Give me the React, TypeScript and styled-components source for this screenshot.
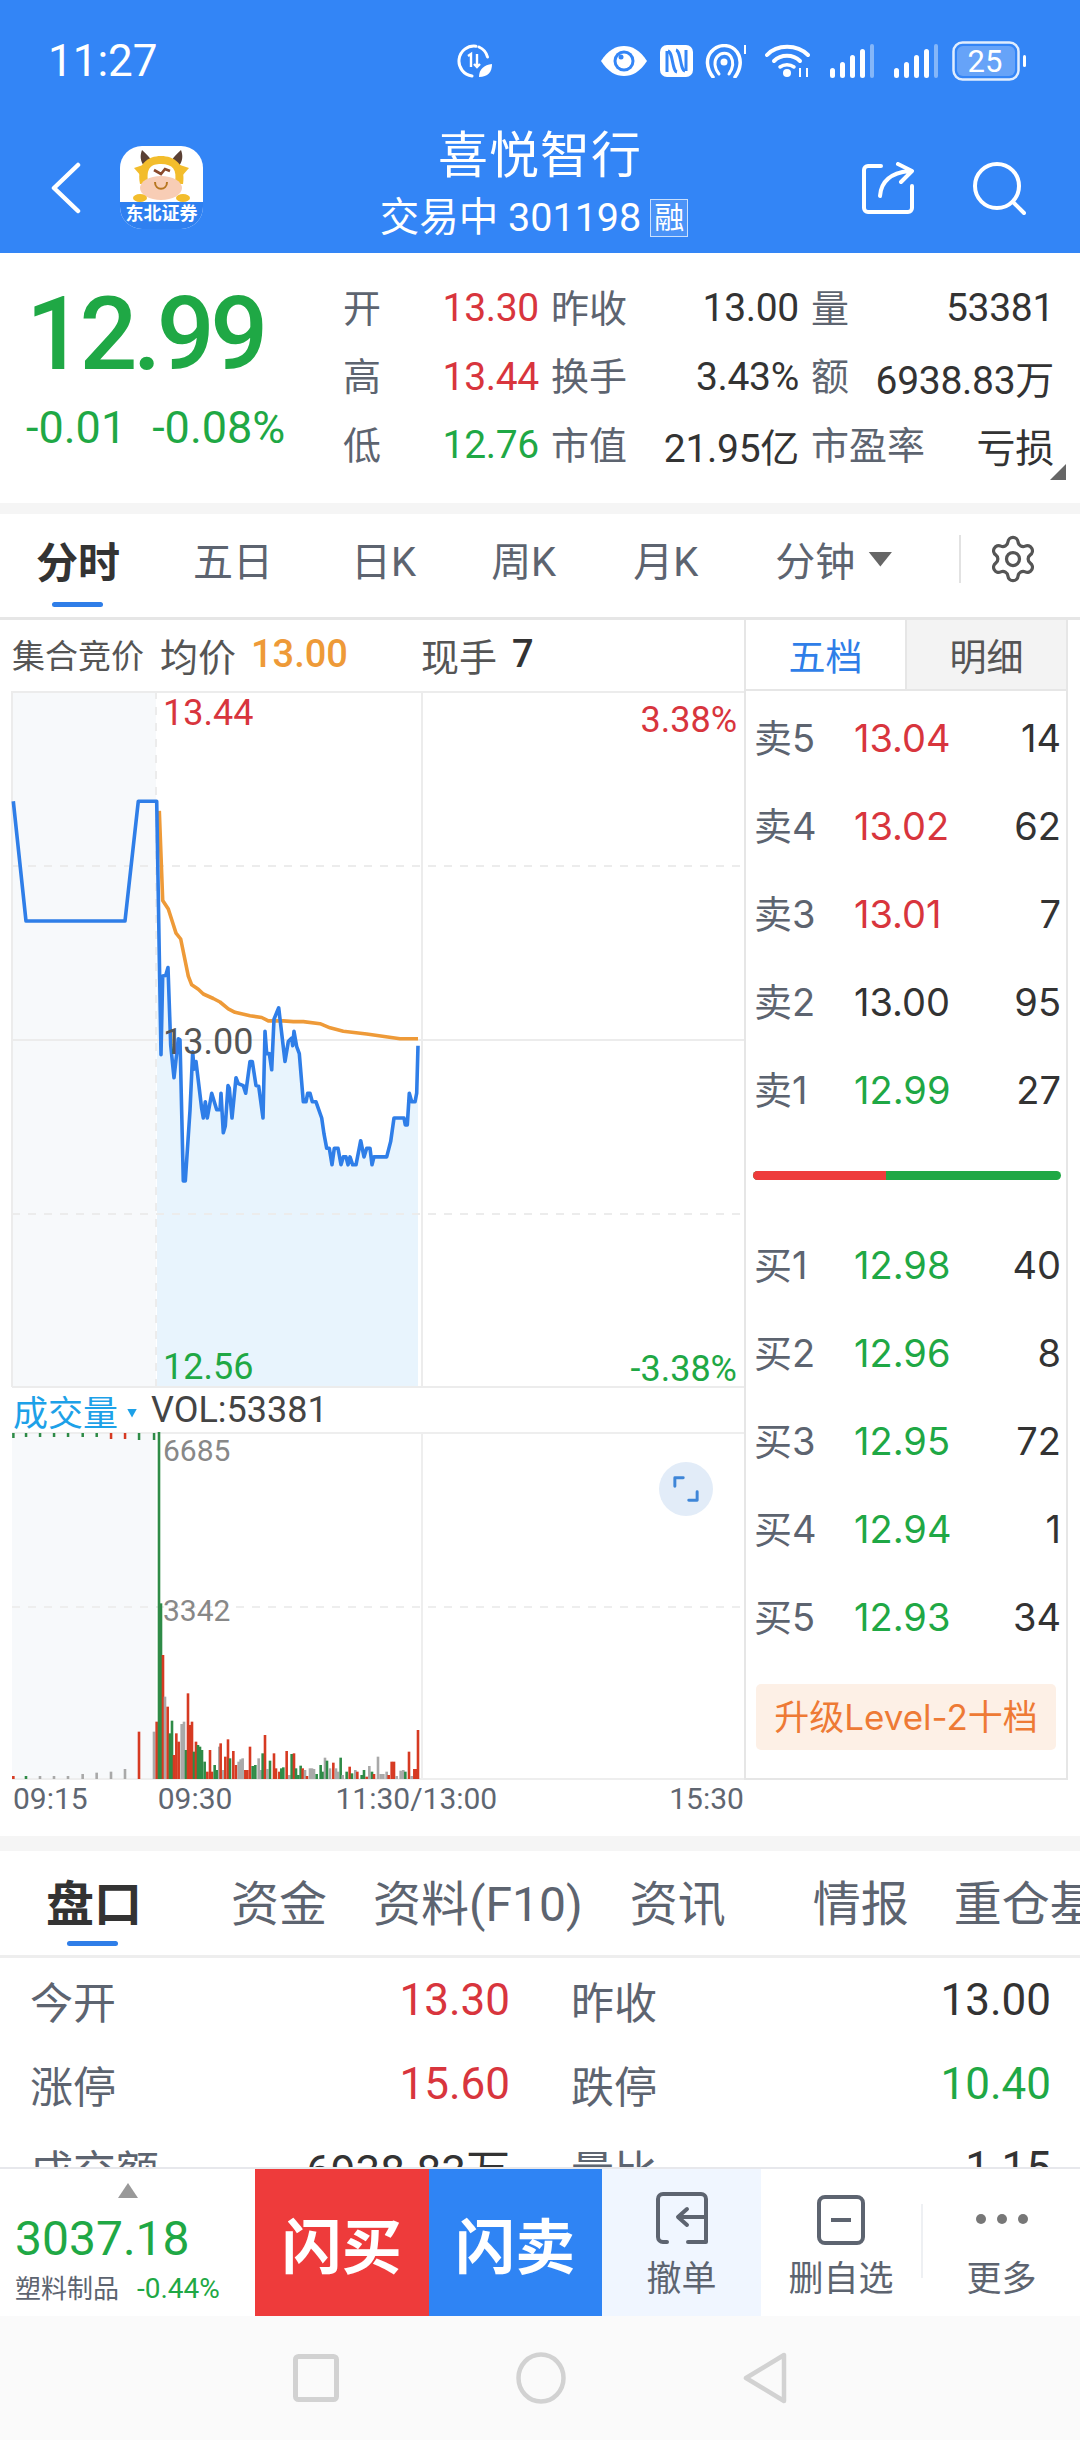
import styled, { createGlobalStyle } from 'styled-components';
import { Settings } from 'lucide-react';

const GREEN = '#1fa845';
const RED = '#d8353d';
const BLUE = '#3385f6';
const NUM = 'Roboto, "Noto Sans CJK SC", sans-serif';

const GlobalStyle = createGlobalStyle`
  html, body { margin: 0; padding: 0; background: #fff; }
  * { box-sizing: border-box; }
`;

const Page = styled.div`
  width: 1080px;
  height: 2440px;
  overflow: hidden;
  display: flex;
  flex-direction: column;
  font-family: ${NUM};
  color: #333;
  background: #fff;
`;

/* header */
const Header = styled.header`
  height: 253px;
  flex: none;
  background: ${BLUE};
  color: #fff;
`;

const StatusBar = styled.div`
  height: 122px;
  display: flex;
  align-items: center;
  padding: 0 54px 0 48px;
`;

const Clock = styled.span`
  font-size: 44px;
  width: 407px;
`;

const StatusIcon = styled.svg<{ $ml?: number }>`
  display: block;
  margin-left: ${(p) => p.$ml ?? 0}px;
  flex: none;
`;

const Spacer = styled.div`
  flex: 1;
`;

const NavBar = styled.div`
  height: 131px;
  display: grid;
  grid-template-columns: 1fr auto 1fr;
  align-items: center;
`;

const NavLeft = styled.div`
  display: flex;
  align-items: center;
  padding-left: 50px;
  gap: 39px;
`;

const NavRight = styled.div`
  display: flex;
  align-items: center;
  justify-content: flex-end;
  padding-right: 54px;
  gap: 56px;
`;

const Logo = styled.div`
  width: 83px;
  height: 83px;
  border-radius: 22px;
  overflow: hidden;
  background: #fff;
  display: flex;
  flex-direction: column;
`;

const LogoLabel = styled.div`
  height: 27px;
  background: #2f80f0;
  color: #fff;
  font-size: 18px;
  font-weight: 700;
  line-height: 24px;
  text-align: center;
  white-space: nowrap;
`;

const TitleBlock = styled.div`
  display: flex;
  flex-direction: column;
  align-items: center;
  margin-bottom: 7px;
`;

const Title = styled.div`
  font-size: 50px;
  line-height: 56px;
  letter-spacing: 1px;
`;

const SubTitle = styled.div`
  margin-top: 12px;
  font-size: 39.5px;
  line-height: 44px;
  display: flex;
  align-items: center;
  gap: 9px;
  margin-left: -12px;
`;

const MarginTag = styled.span`
  width: 38px;
  height: 38px;
  border: 1px solid rgba(255, 255, 255, 0.7);
  background: rgba(255, 255, 255, 0.12);
  font-size: 30px;
  line-height: 36px;
  text-align: center;
  overflow: hidden;
`;

/* quote */
const Quote = styled.section`
  position: relative;
  height: 250px;
  flex: none;
  display: flex;
`;

const PriceBlock = styled.div`
  width: 343px;
  padding: 31px 0 0 26px;
`;

const BigPrice = styled.div`
  font-size: 102px;
  line-height: 100px;
  font-weight: 500;
  letter-spacing: -4.5px;
  color: ${GREEN};
`;

const ChangeRow = styled.div`
  margin: 19px 0 0 0;
  display: flex;
  gap: 26px;
  font-size: 45px;
  line-height: 50px;
  color: ${GREEN};
`;

const QuoteGrid = styled.div`
  padding-top: 21px;
`;

const QuoteRow = styled.div`
  height: 68.5px;
  display: flex;
  align-items: center;
  gap: 12px;
`;

const Pair = styled.div<{ $w: number }>`
  width: ${(p) => p.$w}px;
  display: flex;
  justify-content: space-between;
  align-items: center;
  white-space: nowrap;
`;

const QuoteLabel = styled.span`
  font-size: 38px;
  color: #5d6470;
  margin-bottom: 6px;
`;

const QuoteValue = styled.span<{ $c?: string }>`
  font-size: 39px;
  letter-spacing: -0.3px;
  color: ${(p) => p.$c ?? '#333'};
`;

const CornerMark = styled.div`
  position: absolute;
  right: 14px;
  bottom: 23px;
  width: 16px;
  height: 16px;
  background: #666;
  clip-path: polygon(100% 0, 100% 100%, 0 100%);
`;

const Strip = styled.div<{ $h: number }>`
  height: ${(p) => p.$h}px;
  flex: none;
  background: #f5f5f5;
`;

/* chart tabs */
const ChartTabs = styled.nav`
  height: 106px;
  flex: none;
  display: flex;
  align-items: center;
  padding: 0 41px 13px 36px;
  border-bottom: 3px solid #e6e6e6;
`;

const ChartTab = styled.span<{ $ml?: number; $active?: boolean }>`
  position: relative;
  margin-left: ${(p) => p.$ml ?? 0}px;
  font-size: ${(p) => (p.$active ? 42 : 40)}px;
  font-weight: ${(p) => (p.$active ? 700 : 400)};
  color: ${(p) => (p.$active ? '#333' : '#5d6470')};
  white-space: nowrap;

  ${(p) =>
    p.$active &&
    `&::after {
      content: '';
      position: absolute;
      left: 16px;
      right: 17px;
      bottom: -17px;
      height: 5px;
      border-radius: 3px;
      background: #2f7ee8;
    }`}
`;

const TabCaret = styled.span`
  margin-left: 13px;
  width: 24px;
  height: 15px;
  background: #666;
  clip-path: polygon(0 0, 100% 0, 50% 100%);
`;

const TabDivider = styled.span`
  width: 2px;
  height: 48px;
  margin-left: 67px;
  background: #e2e2e2;
`;

const GearWrap = styled.span`
  display: flex;
  margin-left: auto;
  color: #555;
`;

/* chart area */
const ChartSection = styled.section`
  height: 1216px;
  flex: none;
  display: flex;
`;

const ChartColumn = styled.div`
  width: 744px;
  flex: none;
  display: flex;
  flex-direction: column;
`;

const ChartInfo = styled.div`
  height: 71px;
  flex: none;
  display: flex;
  align-items: center;
  padding: 0 0 3px 12px;
  white-space: nowrap;
`;

const InfoLabel = styled.span<{ $ml?: number; $size?: number }>`
  margin-left: ${(p) => p.$ml ?? 0}px;
  font-size: ${(p) => p.$size ?? 38}px;
  color: #555;
`;

const InfoValue = styled.span<{ $c: string; $ml: number }>`
  margin-left: ${(p) => p.$ml}px;
  font-size: 38px;
  font-weight: 500;
  color: ${(p) => p.$c};
`;

const ChartBox = styled.div<{ $h: number }>`
  position: relative;
  height: ${(p) => p.$h}px;
  flex: none;

  svg {
    display: block;
  }
`;

const ChartTag = styled.span<{ $c: string; $x?: number; $r?: number; $cy: number; $size?: number }>`
  position: absolute;
  ${(p) => (p.$r !== undefined ? `right: ${p.$r}px;` : `left: ${p.$x}px;`)}
  top: ${(p) => p.$cy - 25}px;
  font-size: ${(p) => p.$size ?? 36}px;
  line-height: 50px;
  color: ${(p) => p.$c};
`;

const ExpandButton = styled.div`
  position: absolute;
  left: 659px;
  top: 30px;
  width: 54px;
  height: 54px;
  border-radius: 50%;
  background: #e2ecf8;
  display: flex;
  align-items: center;
  justify-content: center;
`;

const VolHeader = styled.div`
  height: 44px;
  flex: none;
  display: flex;
  align-items: center;
  padding-left: 13px;
  white-space: nowrap;
`;

const VolTitle = styled.span`
  font-size: 35px;
  color: #1da1e8;
`;

const VolCaret = styled.span`
  width: 10px;
  height: 9px;
  margin: 6px 14px 0 9px;
  background: #1da1e8;
  clip-path: polygon(0 0, 100% 0, 50% 100%);
`;

const VolValue = styled.span`
  font-size: 36px;
  color: #444;
`;

const TimeAxis = styled.div`
  height: 56px;
  display: flex;
  padding: 0 0 0 13px;
  font-size: 30px;
  line-height: 38px;
  color: #5f6671;
`;

const TimeLabel = styled.span<{ $ml?: number }>`
  margin-left: ${(p) => p.$ml ?? 0}px;
`;

/* order book */
const DepthColumn = styled.div`
  width: 324px;
  height: 1160px;
  flex: none;
  border-left: 2px solid #e6e6e6;
  border-right: 2px solid #e6e6e6;
  border-bottom: 2px solid #e6e6e6;
  display: flex;
  flex-direction: column;
`;

const DepthTabs = styled.div`
  height: 71px;
  flex: none;
  display: flex;
  border-bottom: 2px solid #e6e6e6;
`;

const DepthTab = styled.div<{ $active?: boolean }>`
  flex: 1;
  display: flex;
  align-items: center;
  justify-content: center;
  font-size: 37px;
  color: ${(p) => (p.$active ? '#2f7ee8' : '#555')};
  background: ${(p) => (p.$active ? '#fff' : '#f3f3f3')};
  border-left: ${(p) => (p.$active ? 'none' : '2px solid #e6e6e6')};
`;

const DepthList = styled.div`
  padding-top: 3px;
`;

const DepthRow = styled.div`
  height: 88px;
  display: grid;
  grid-template-columns: 100px 1fr auto;
  align-items: center;
  padding: 0 5px 0 8px;
  font-family: Inter, "Noto Sans CJK SC", sans-serif;
  font-size: 38px;
`;

const DepthLabel = styled.span`
  color: #5d6470;
  white-space: nowrap;
  margin-bottom: 6px;
`;

const DepthPrice = styled.span<{ $c: string }>`
  color: ${(p) => p.$c};
`;

const DepthQty = styled.span`
  color: #333;
`;

const Balance = styled.div`
  margin: 37px 0 0 7px;
  width: 308px;
  height: 9px;
  border-radius: 5px;
  overflow: hidden;
  display: flex;
  background: ${GREEN};
`;

const BalanceRed = styled.div`
  width: 133px;
  background: #ee3b3b;
`;

const BuyList = styled.div`
  margin-top: 41px;
`;

const UpgradeBadge = styled.div`
  margin: 23px 0 0 10px;
  width: 300px;
  height: 66px;
  border-radius: 5px;
  background: #fdf0e6;
  color: #ee7a35;
  font-family: Inter, "Noto Sans CJK SC", sans-serif;
  font-size: 35px;
  line-height: 66px;
  text-align: center;
  white-space: nowrap;
`;

/* detail */
const DetailTabs = styled.nav`
  height: 107px;
  flex: none;
  display: flex;
  align-items: center;
  padding: 0 0 7px 46px;
  border-bottom: 3px solid #eee;
  overflow: hidden;
  white-space: nowrap;
`;

const DetailTab = styled.span<{ $ml?: number; $active?: boolean }>`
  position: relative;
  flex: none;
  margin-left: ${(p) => p.$ml ?? 0}px;
  font-size: 48px;
  font-weight: ${(p) => (p.$active ? 700 : 400)};
  color: ${(p) => (p.$active ? '#333' : '#5d6470')};

  ${(p) =>
    p.$active &&
    `&::after {
      content: '';
      position: absolute;
      left: 21px;
      right: 24px;
      bottom: -11px;
      height: 5px;
      border-radius: 3px;
      background: #2f7ee8;
    }`}
`;

const DetailRows = styled.div`
  height: 209px;
  flex: none;
  overflow: hidden;
`;

const DetailRow = styled.div`
  height: 84px;
  display: flex;
  align-items: center;
  gap: 61px;
  padding-left: 30px;
`;

const DetailPair = styled.div`
  width: 480px;
  display: flex;
  justify-content: space-between;
  align-items: center;
`;

const DetailLabel = styled.span`
  font-size: 43px;
  color: #5d6470;
`;

const DetailValue = styled.span<{ $c?: string }>`
  font-size: 44px;
  color: ${(p) => p.$c ?? '#333'};
`;

/* bottom bar */
const BottomBar = styled.div`
  height: 149px;
  flex: none;
  display: flex;
  border-top: 2px solid #e7e8ec;
`;

const IndexBlock = styled.div`
  position: relative;
  width: 255px;
  flex: none;
  padding: 40px 0 0 15px;
`;

const IndexCaret = styled.span`
  position: absolute;
  left: 118px;
  top: 14px;
  width: 20px;
  height: 15px;
  background: #999;
  clip-path: polygon(50% 0, 100% 100%, 0 100%);
`;

const IndexValue = styled.div`
  font-size: 48px;
  line-height: 60px;
  color: ${GREEN};
`;

const IndexMeta = styled.div`
  margin-top: 2px;
  display: flex;
  align-items: center;
  gap: 18px;
  line-height: 36px;
  white-space: nowrap;
`;

const IndexName = styled.span`
  font-size: 26px;
  color: #5d6470;
`;

const IndexChange = styled.span`
  font-size: 28px;
  color: ${GREEN};
`;

const FlashButton = styled.div<{ $bg: string }>`
  width: 173.5px;
  flex: none;
  background: ${(p) => p.$bg};
  color: #fff;
  font-size: 60px;
  font-weight: 700;
  display: flex;
  align-items: center;
  justify-content: center;
`;

const ActionButton = styled.div<{ $w: number; $bg?: string }>`
  width: ${(p) => p.$w}px;
  flex: none;
  background: ${(p) => p.$bg ?? 'transparent'};
  display: flex;
  flex-direction: column;
  align-items: center;
  padding-top: 22px;
  font-size: 35px;
  line-height: 42px;
  color: #5d6470;
`;

const IconSlot = styled.div`
  height: 54px;
  margin-bottom: 14px;
  display: flex;
  align-items: flex-end;

  svg {
    display: block;
  }
`;

const ActionDivider = styled.div`
  width: 2px;
  height: 74px;
  margin-top: 35px;
  flex: none;
  background: #eef0f3;
`;

const NavHints = styled.div`
  flex: 1;
  background: #fafafa;
  display: flex;
  align-items: center;
  justify-content: center;
  gap: 177px;
`;

const priceLine: [number, number][] = [
  [40, 352], [78, 700], [375, 700], [415, 352], [470, 352], [478, 800], [483, 1088], [488, 860], [497, 858], [504, 835],
  [512, 1060], [522, 1155], [535, 1042], [540, 1045], [550, 1455], [556, 1455], [570, 1250], [578, 1080], [582, 1130],
  [588, 1108], [605, 1245], [610, 1272], [616, 1225], [622, 1272], [635, 1200], [650, 1248], [660, 1248], [663, 1200],
  [670, 1315], [676, 1295], [684, 1178], [688, 1185], [696, 1272], [708, 1155], [715, 1172], [730, 1178], [737, 1200],
  [750, 1108], [757, 1108], [768, 1178], [776, 1180], [789, 1272], [795, 1020], [800, 1085], [808, 1085], [815, 1132],
  [822, 985], [836, 952], [855, 1108], [865, 1050], [875, 1040], [878, 1062], [882, 1020], [890, 1065], [898, 1085],
  [910, 1225], [918, 1225], [923, 1200], [930, 1200], [937, 1225], [948, 1225], [965, 1272], [972, 1318], [980, 1360],
  [988, 1360], [996, 1408], [1003, 1360], [1014, 1360], [1023, 1408], [1030, 1385], [1038, 1385], [1044, 1408],
  [1050, 1385], [1058, 1408], [1068, 1408], [1082, 1338], [1092, 1385], [1100, 1360], [1110, 1360], [1116, 1408],
  [1122, 1385], [1160, 1385], [1172, 1340], [1182, 1272], [1212, 1272], [1216, 1292], [1222, 1292], [1228, 1200],
  [1235, 1225], [1245, 1225], [1250, 1200], [1254, 1062],
];

const avgLine: [number, number][] = [
  [478, 380], [488, 640], [505, 665], [518, 705], [528, 735], [542, 752], [565, 860], [575, 885], [595, 898], [610, 912],
  [640, 925], [660, 935], [685, 955], [705, 965], [750, 975], [785, 980], [805, 990], [850, 990], [880, 992], [910, 992],
  [960, 998], [990, 1010], [1030, 1020], [1100, 1028], [1200, 1042], [1254, 1042],
];

const toPoint = ([x, y]: [number, number]) => `${(x / 3).toFixed(1)},${(y / 2.904 - 11).toFixed(1)}`;

const volColors: Record<string, string> = { r: '#d63a22', g: '#2e8b47', a: '#a9a9a9' };

const volBars: [number, number, string][] = [
  [40, 1218, 'r'], [78, 1218, 'g'], [120, 1218, 'a'], [162, 1218, 'a'], [204, 1218, 'a'], [248, 1212, 'a'], [290, 1208, 'a'],
  [333, 1205, 'a'], [375, 1197, 'a'], [417, 1085, 'r'], [462, 1085, 'a'], [470, 1055, 'r'], [477, 185, 'g'], [483, 700, 'g'],
  [489, 855, 'r'], [495, 980, 'a'], [503, 1010, 'r'], [510, 1090, 'g'], [516, 1052, 'g'], [522, 1155, 'r'], [529, 1090, 'r'],
  [536, 1115, 'r'], [545, 1062, 'a'], [552, 1055, 'a'], [558, 1140, 'g'], [564, 970, 'r'], [570, 1065, 'r'], [576, 1055, 'r'],
  [582, 1145, 'g'], [588, 1115, 'r'], [594, 1125, 'g'], [600, 1130, 'g'], [606, 1140, 'g'], [614, 1175, 'g'], [622, 1205, 'r'],
  [630, 1140, 'r'], [636, 1205, 'r'], [644, 1185, 'g'], [650, 1200, 'g'], [658, 1130, 'a'], [662, 1120, 'r'], [670, 1200, 'a'],
  [676, 1160, 'r'], [684, 1108, 'r'], [690, 1165, 'g'], [700, 1143, 'r'], [708, 1185, 'r'], [716, 1175, 'a'], [722, 1168, 'a'],
  [728, 1165, 'a'], [736, 1200, 'r'], [742, 1200, 'r'], [750, 1130, 'r'], [758, 1188, 'g'], [766, 1185, 'g'], [776, 1165, 'a'],
  [782, 1200, 'a'], [788, 1150, 'g'], [795, 1095, 'r'], [802, 1197, 'a'], [810, 1172, 'g'], [822, 1150, 'r'], [828, 1195, 'r'],
  [838, 1205, 'r'], [844, 1195, 'g'], [850, 1192, 'g'], [860, 1143, 'r'], [868, 1215, 'a'], [875, 1152, 'g'], [882, 1150, 'r'],
  [888, 1195, 'g'], [895, 1215, 'g'], [902, 1187, 'g'], [908, 1195, 'r'], [915, 1200, 'a'], [921, 1218, 'r'], [930, 1195, 'a'],
  [936, 1195, 'a'], [942, 1197, 'a'], [950, 1212, 'g'], [962, 1185, 'g'], [968, 1205, 'g'], [975, 1163, 'a'], [981, 1172, 'g'],
  [990, 1195, 'a'], [1000, 1178, 'r'], [1008, 1195, 'a'], [1014, 1205, 'a'], [1022, 1163, 'g'], [1028, 1215, 'a'], [1040, 1205, 'g'],
  [1049, 1190, 'r'], [1056, 1210, 'g'], [1066, 1200, 'a'], [1072, 1205, 'r'], [1085, 1215, 'g'], [1092, 1200, 'g'], [1100, 1220, 'r'],
  [1108, 1188, 'a'], [1116, 1205, 'g'], [1122, 1212, 'r'], [1134, 1160, 'a'], [1142, 1212, 'a'], [1150, 1212, 'a'], [1160, 1205, 'a'],
  [1166, 1215, 'r'], [1175, 1175, 'r'], [1182, 1175, 'r'], [1190, 1218, 'a'], [1202, 1202, 'a'], [1210, 1200, 'a'], [1216, 1205, 'g'],
  [1227, 1145, 'r'], [1235, 1218, 'a'], [1243, 1197, 'r'], [1248, 1197, 'r'], [1254, 1080, 'r'],
];

const topTicks: [number, number, string][] = [
  [40, 5, 'g'], [78, 4, 'g'], [120, 4, 'g'], [162, 4, 'g'], [204, 4, 'g'], [248, 4, 'g'], [290, 4, 'g'], [333, 6, 'r'], [375, 6, 'r'], [417, 7, 'g'], [462, 7, 'g'],
];

const sells = [
  { label: '卖5', price: '13.04', c: RED, qty: '14' },
  { label: '卖4', price: '13.02', c: RED, qty: '62' },
  { label: '卖3', price: '13.01', c: RED, qty: '7' },
  { label: '卖2', price: '13.00', c: '#333', qty: '95' },
  { label: '卖1', price: '12.99', c: GREEN, qty: '27' },
];

const buys = [
  { label: '买1', price: '12.98', c: GREEN, qty: '40' },
  { label: '买2', price: '12.96', c: GREEN, qty: '8' },
  { label: '买3', price: '12.95', c: GREEN, qty: '72' },
  { label: '买4', price: '12.94', c: GREEN, qty: '1' },
  { label: '买5', price: '12.93', c: GREEN, qty: '34' },
];

function SignalIcon({ ml }: { ml: number }) {
  return (
    <StatusIcon $ml={ml} width="45" height="34" viewBox="0 0 45 34">
      <rect x="1" y="24" width="5" height="10" rx="2.5" fill="#fff" />
      <rect x="11" y="18" width="5" height="16" rx="2.5" fill="#fff" />
      <rect x="21" y="11" width="5" height="23" rx="2.5" fill="#fff" />
      <rect x="31" y="5" width="5" height="29" rx="2.5" fill="#fff" />
      <rect x="41" y="0" width="4" height="34" rx="2" fill="#fff" opacity="0.4" />
    </StatusIcon>
  );
}

function PriceChart() {
  const line = priceLine.map(toPoint).join(' ');
  const area = `${priceLine.slice(4).map(toPoint).join(' ')} 418,696 157,696`;
  return (
    <svg width="744" height="697" viewBox="0 0 744 697">
      <rect x="12" y="0" width="144" height="696" fill="#f7f9fb" />
      <polygon points={area} fill="#e8f4fd" />
      <g stroke="#ececec" strokeWidth="2" fill="none">
        <path d="M12 1H744M12 349H744M12 696H744M12 0V696M422 0V696" />
        <path d="M12 175H744M12 523H744M156 0V696" strokeDasharray="8 8" />
      </g>
      <polyline points={avgLine.map(toPoint).join(' ')} fill="none" stroke="#ee9a38" strokeWidth="3.6" strokeLinejoin="round" />
      <polyline points={line} fill="none" stroke="#2f7ee8" strokeWidth="3.6" strokeLinejoin="round" />
    </svg>
  );
}

function VolumeChart() {
  return (
    <svg width="744" height="348" viewBox="0 0 744 348">
      <rect x="12" y="0" width="144" height="347" fill="#f7f9fb" />
      <g stroke="#eeeeee" strokeWidth="2" fill="none">
        <path d="M12 1H744M12 347H744M422 0V348" />
        <path d="M12 175H744" strokeDasharray="8 8" />
      </g>
      {topTicks.map(([x, h, c]) => (
        <rect key={x} x={x / 3 - 1.2} y="1" width="2.5" height={h} fill={volColors[c]} />
      ))}
      {volBars.map(([x, top, c]) => (
        <rect key={x} x={x / 3 - 1.3} y={top / 3 - 62} width="2.6" height={347 - (top / 3 - 62)} fill={volColors[c]} />
      ))}
    </svg>
  );
}

function DepthRows({ rows }: { rows: typeof sells }) {
  return (
    <>
      {rows.map((r) => (
        <DepthRow key={r.label}>
          <DepthLabel>{r.label}</DepthLabel>
          <DepthPrice $c={r.c}>{r.price}</DepthPrice>
          <DepthQty>{r.qty}</DepthQty>
        </DepthRow>
      ))}
    </>
  );
}

export default function App() {
  return (
    <Page>
      <GlobalStyle />
      <Header>
        <StatusBar>
          <Clock>11:27</Clock>
          <StatusIcon width="38" height="34" viewBox="0 0 38 34">
            <path d="M21 2.2A15 15 0 1 0 17 32" fill="none" stroke="#fff" strokeWidth="3" strokeLinecap="round" />
            <path d="M24 3A15 15 0 0 1 32.5 13" fill="none" stroke="#fff" strokeWidth="3" strokeLinecap="round" />
            <path d="M13 12l3-2v13M22 10v13M19 20l3 3 3-3" fill="none" stroke="#fff" strokeWidth="2.4" />
            <path d="M24 33c0-8 5-12 13-13 0 8-4 13-13 13z" fill="#fff" />
          </StatusIcon>
          <Spacer />
          <StatusIcon width="48" height="34" viewBox="0 0 48 34">
            <path d="M1 17C8 6 16 2 24 2s16 4 23 15c-7 11-15 15-23 15S8 28 1 17z" fill="#fff" />
            <circle cx="24" cy="17" r="10.5" fill={BLUE} />
            <circle cx="24" cy="17" r="7.5" fill="#fff" />
            <circle cx="21" cy="13" r="2.5" fill={BLUE} />
          </StatusIcon>
          <StatusIcon $ml={12} width="33" height="34" viewBox="0 0 33 34">
            <rect x="0" y="1" width="33" height="32" rx="7" fill="#fff" />
            <path d="M7 28V7M26 6v21M8 7c5 1 4 20 9 21M16 6c5 1 4 20 9 21" fill="none" stroke={BLUE} strokeWidth="3" />
          </StatusIcon>
          <StatusIcon $ml={12} width="44" height="34" viewBox="0 0 44 34">
            <path d="M8 33C1 24 1 14 6 8c8-9 20-8 26 0 5 7 4 17-2 25" fill="none" stroke="#fff" strokeWidth="3.5" strokeLinecap="round" />
            <path d="M14 30C9 24 9 17 12 13c4-5 11-5 14 0 3 5 2 11-2 17" fill="none" stroke="#fff" strokeWidth="3" strokeLinecap="round" />
            <circle cx="19" cy="18" r="3.5" fill="#fff" />
            <path d="M40 1v9" stroke="#fff" strokeWidth="2" />
          </StatusIcon>
          <StatusIcon $ml={16} width="45" height="34" viewBox="0 0 45 34">
            <path d="M2 11C12 0 32 0 43 11" fill="none" stroke="#fff" strokeWidth="4" strokeLinecap="round" />
            <path d="M9 17c7-7 19-7 26 0" fill="none" stroke="#fff" strokeWidth="4" strokeLinecap="round" />
            <path d="M15 23c4-3 10-3 14 0" fill="none" stroke="#fff" strokeWidth="3.5" strokeLinecap="round" />
            <circle cx="22" cy="29" r="4" fill="#fff" />
            <path d="M35 24v9M42 24v9" stroke="#fff" strokeWidth="2" />
          </StatusIcon>
          <SignalIcon ml={19} />
          <SignalIcon ml={19} />
          <StatusIcon $ml={14} width="74" height="40" viewBox="0 0 74 40">
            <rect x="1.5" y="1.5" width="65" height="37" rx="9" fill="none" stroke="#fff" strokeWidth="2.5" opacity="0.85" />
            <rect x="5" y="5" width="58" height="30" rx="6" fill="#fff" opacity="0.25" />
            <text x="33" y="31" textAnchor="middle" fill="#fff" fontFamily="Roboto, sans-serif" fontSize="31">25</text>
            <rect x="71" y="14" width="3" height="12" rx="1.5" fill="#fff" />
          </StatusIcon>
        </StatusBar>
        <NavBar>
          <NavLeft>
            <svg width="31" height="52" viewBox="0 0 31 52">
              <path d="M28 3L4 26l24 23" fill="none" stroke="#fff" strokeWidth="4.5" strokeLinecap="round" strokeLinejoin="round" />
            </svg>
            <Logo>
              <svg width="83" height="56" viewBox="0 0 83 56">
                <path d="M24 20c-4-5-4-11-2-16 3 3 7 6 9 10zM59 20c4-5 4-11 2-16-3 3-7 6-9 10z" fill="#5a4034" />
                <path d="M14 22l12-4 4 9-9 3zM69 22l-12-4-4 9 9 3z" fill="#f3bd2c" />
                <path d="M20 38c-4-20 8-28 21-28s25 8 22 28z" fill="#f3bd2c" />
                <path d="M28 36c-2-14 3-18 13-18 12 0 16 6 14 18z" fill="#fff" />
                <path d="M34 24l7 4 4-5 5 2" fill="none" stroke="#8a4a2c" strokeWidth="2.6" />
                <ellipse cx="41" cy="42" rx="21" ry="12" fill="#f8cdb5" />
                <path d="M35 36c0 9 12 9 12 0" fill="none" stroke="#b7761f" strokeWidth="2" />
                <ellipse cx="20" cy="52" rx="7" ry="4" fill="#f3bd2c" />
                <ellipse cx="63" cy="52" rx="7" ry="4" fill="#f3bd2c" />
              </svg>
              <LogoLabel>东北证券</LogoLabel>
            </Logo>
          </NavLeft>
          <TitleBlock>
            <Title>喜悦智行</Title>
            <SubTitle>
              <span>交易中 301198</span>
              <MarginTag>融</MarginTag>
            </SubTitle>
          </TitleBlock>
          <NavRight>
            <svg width="54" height="52" viewBox="0 0 54 52">
              <path d="M19 4H6a4 4 0 0 0-4 4v38a4 4 0 0 0 4 4h40a4 4 0 0 0 4-4V24" fill="none" stroke="#fff" strokeWidth="4" strokeLinecap="round" />
              <path d="M18 34C19 20 28 11 47 9M36 2l14 7-11 11" fill="none" stroke="#fff" strokeWidth="4" strokeLinecap="round" strokeLinejoin="round" />
            </svg>
            <svg width="54" height="54" viewBox="0 0 54 54">
              <circle cx="25" cy="25" r="22" fill="none" stroke="#fff" strokeWidth="4" />
              <path d="M41 41l11 11" stroke="#fff" strokeWidth="4" strokeLinecap="round" />
            </svg>
          </NavRight>
        </NavBar>
      </Header>

      <Quote>
        <PriceBlock>
          <BigPrice>12.99</BigPrice>
          <ChangeRow>
            <span>-0.01</span>
            <span>-0.08%</span>
          </ChangeRow>
        </PriceBlock>
        <QuoteGrid>
          <QuoteRow>
            <Pair $w={196}><QuoteLabel>开</QuoteLabel><QuoteValue $c={RED}>13.30</QuoteValue></Pair>
            <Pair $w={248}><QuoteLabel>昨收</QuoteLabel><QuoteValue>13.00</QuoteValue></Pair>
            <Pair $w={243}><QuoteLabel>量</QuoteLabel><QuoteValue>53381</QuoteValue></Pair>
          </QuoteRow>
          <QuoteRow>
            <Pair $w={196}><QuoteLabel>高</QuoteLabel><QuoteValue $c={RED}>13.44</QuoteValue></Pair>
            <Pair $w={248}><QuoteLabel>换手</QuoteLabel><QuoteValue>3.43%</QuoteValue></Pair>
            <Pair $w={243}><QuoteLabel>额</QuoteLabel><QuoteValue>6938.83万</QuoteValue></Pair>
          </QuoteRow>
          <QuoteRow>
            <Pair $w={196}><QuoteLabel>低</QuoteLabel><QuoteValue $c={GREEN}>12.76</QuoteValue></Pair>
            <Pair $w={248}><QuoteLabel>市值</QuoteLabel><QuoteValue>21.95亿</QuoteValue></Pair>
            <Pair $w={243}><QuoteLabel>市盈率</QuoteLabel><QuoteValue>亏损</QuoteValue></Pair>
          </QuoteRow>
        </QuoteGrid>
        <CornerMark />
      </Quote>
      <Strip $h={11} />

      <ChartTabs>
        <ChartTab $active>分时</ChartTab>
        <ChartTab $ml={73}>五日</ChartTab>
        <ChartTab $ml={78}>日K</ChartTab>
        <ChartTab $ml={75}>周K</ChartTab>
        <ChartTab $ml={77}>月K</ChartTab>
        <ChartTab $ml={77}>分钟</ChartTab>
        <TabCaret />
        <TabDivider />
        <GearWrap><Settings size={52} strokeWidth={1.5} /></GearWrap>
      </ChartTabs>

      <ChartSection>
        <ChartColumn>
          <ChartInfo>
            <InfoLabel $size={33}>集合竞价</InfoLabel>
            <InfoLabel $ml={16}>均价</InfoLabel>
            <InfoValue $c="#ee9a38" $ml={15}>13.00</InfoValue>
            <InfoLabel $ml={73}>现手</InfoLabel>
            <InfoValue $c="#333" $ml={15}>7</InfoValue>
          </ChartInfo>
          <ChartBox $h={697}>
            <PriceChart />
            <ChartTag $c={RED} $x={163} $cy={22}>13.44</ChartTag>
            <ChartTag $c="#555" $x={163} $cy={351}>13.00</ChartTag>
            <ChartTag $c={GREEN} $x={163} $cy={676}>12.56</ChartTag>
            <ChartTag $c={RED} $r={7} $cy={29}>3.38%</ChartTag>
            <ChartTag $c={GREEN} $r={7} $cy={678}>-3.38%</ChartTag>
          </ChartBox>
          <VolHeader>
            <VolTitle>成交量</VolTitle>
            <VolCaret />
            <VolValue>VOL:53381</VolValue>
          </VolHeader>
          <ChartBox $h={348}>
            <VolumeChart />
            <ChartTag $c="#888" $x={163} $cy={19} $size={30}>6685</ChartTag>
            <ChartTag $c="#888" $x={163} $cy={179} $size={30}>3342</ChartTag>
            <ExpandButton>
              <svg width="26" height="26" viewBox="0 0 28 28">
                <path d="M2 11V2h9M17 26h9v-9" fill="none" stroke="#3f86d8" strokeWidth="3.2" strokeLinecap="round" strokeLinejoin="round" />
              </svg>
            </ExpandButton>
          </ChartBox>
          <TimeAxis>
            <TimeLabel>09:15</TimeLabel>
            <TimeLabel $ml={70}>09:30</TimeLabel>
            <TimeLabel $ml={103}>11:30/13:00</TimeLabel>
            <TimeLabel $ml={172}>15:30</TimeLabel>
          </TimeAxis>
        </ChartColumn>
        <DepthColumn>
          <DepthTabs>
            <DepthTab $active>五档</DepthTab>
            <DepthTab>明细</DepthTab>
          </DepthTabs>
          <DepthList>
            <DepthRows rows={sells} />
          </DepthList>
          <Balance><BalanceRed /></Balance>
          <BuyList>
            <DepthRows rows={buys} />
          </BuyList>
          <UpgradeBadge>升级Level-2十档</UpgradeBadge>
        </DepthColumn>
      </ChartSection>
      <Strip $h={15} />

      <DetailTabs>
        <DetailTab $active>盘口</DetailTab>
        <DetailTab $ml={89}>资金</DetailTab>
        <DetailTab $ml={46}>资料(F10)</DetailTab>
        <DetailTab $ml={47}>资讯</DetailTab>
        <DetailTab $ml={87}>情报</DetailTab>
        <DetailTab $ml={45}>重仓基金</DetailTab>
      </DetailTabs>
      <DetailRows>
        <DetailRow>
          <DetailPair><DetailLabel>今开</DetailLabel><DetailValue $c={RED}>13.30</DetailValue></DetailPair>
          <DetailPair><DetailLabel>昨收</DetailLabel><DetailValue>13.00</DetailValue></DetailPair>
        </DetailRow>
        <DetailRow>
          <DetailPair><DetailLabel>涨停</DetailLabel><DetailValue $c={RED}>15.60</DetailValue></DetailPair>
          <DetailPair><DetailLabel>跌停</DetailLabel><DetailValue $c={GREEN}>10.40</DetailValue></DetailPair>
        </DetailRow>
        <DetailRow>
          <DetailPair><DetailLabel>成交额</DetailLabel><DetailValue>6938.83万</DetailValue></DetailPair>
          <DetailPair><DetailLabel>量比</DetailLabel><DetailValue>1.15</DetailValue></DetailPair>
        </DetailRow>
      </DetailRows>

      <BottomBar>
        <IndexBlock>
          <IndexCaret />
          <IndexValue>3037.18</IndexValue>
          <IndexMeta>
            <IndexName>塑料制品</IndexName>
            <IndexChange>-0.44%</IndexChange>
          </IndexMeta>
        </IndexBlock>
        <FlashButton $bg="#ee3b3b">闪买</FlashButton>
        <FlashButton $bg="#2f84f4">闪卖</FlashButton>
        <ActionButton $w={159} $bg="#f0f6ff">
          <IconSlot>
            <svg width="54" height="54" viewBox="0 0 54 54">
              <path d="M12 51H8a5 5 0 0 1-5-5V8a5 5 0 0 1 5-5h38a5 5 0 0 1 5 5v18H25M33 51h18V26M32 18l-9 8 9 8" fill="none" stroke="#5d6470" strokeWidth="4" strokeLinejoin="round" strokeLinecap="round" />
            </svg>
          </IconSlot>
          撤单
        </ActionButton>
        <ActionButton $w={160}>
          <IconSlot>
            <svg width="48" height="50" viewBox="0 0 48 50">
              <rect x="2" y="2" width="44" height="46" rx="6" fill="none" stroke="#5d6470" strokeWidth="4" />
              <path d="M14 25h20" stroke="#5d6470" strokeWidth="4" />
            </svg>
          </IconSlot>
          删自选
        </ActionButton>
        <ActionDivider />
        <ActionButton $w={157}>
          <IconSlot>
            <svg width="54" height="54" viewBox="0 0 54 54">
              <circle cx="6" cy="28" r="5" fill="#777" />
              <circle cx="27" cy="28" r="5" fill="#777" />
              <circle cx="48" cy="28" r="5" fill="#777" />
            </svg>
          </IconSlot>
          更多
        </ActionButton>
      </BottomBar>

      <NavHints>
        <svg width="46" height="48" viewBox="0 0 46 48">
          <rect x="2.5" y="2.5" width="41" height="43" rx="3" fill="none" stroke="#d2d2d2" strokeWidth="5" />
        </svg>
        <svg width="50" height="52" viewBox="0 0 50 52">
          <ellipse cx="25" cy="26" rx="22.5" ry="23.5" fill="none" stroke="#d2d2d2" strokeWidth="4.5" />
        </svg>
        <svg width="44" height="52" viewBox="0 0 44 52">
          <path d="M41 3v46L3 26z" fill="none" stroke="#d2d2d2" strokeWidth="4.5" strokeLinejoin="round" />
        </svg>
      </NavHints>
    </Page>
  );
}
